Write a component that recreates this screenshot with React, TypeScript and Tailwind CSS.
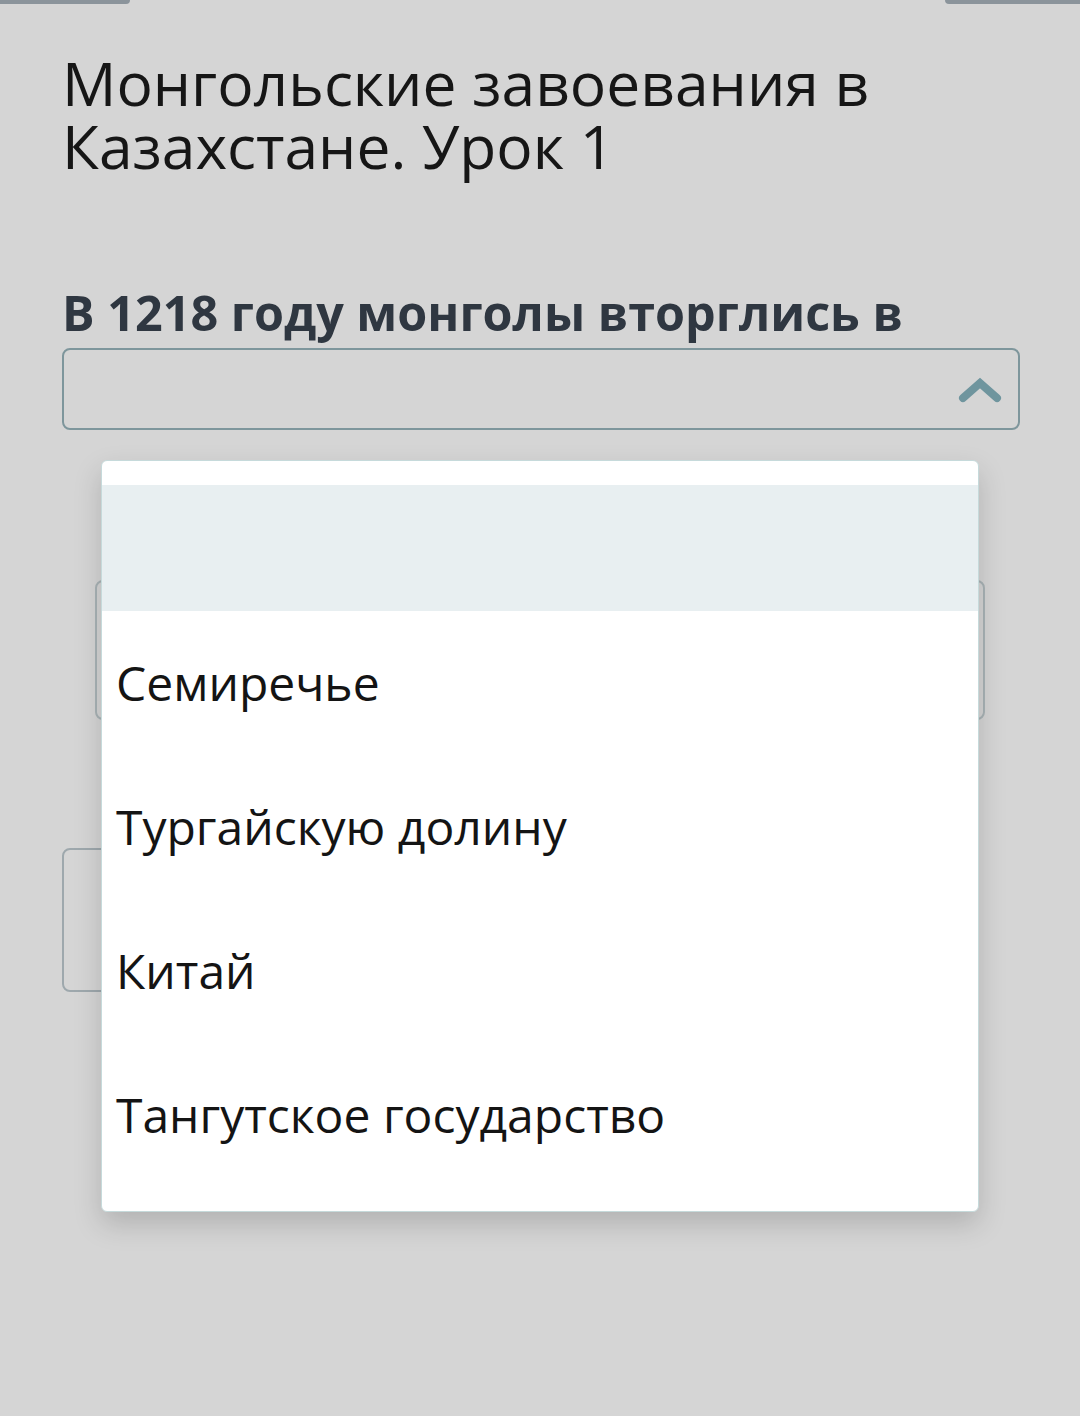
const options = ["Семиречье", "Тургайскую долину", "Китай", "Тангутское государство"];

// Thick caret shown while the list is open
function Caret() {
  return (
    <svg width="44" height="26" viewBox="0 0 44 26" fill="none" className="text-[#6f959e]">
      <path d="M5 21 L22 6 L39 21" stroke="currentColor" strokeWidth="8" strokeLinejoin="miter" strokeLinecap="round" />
    </svg>
  );
}

export default function App() {
  return (
    <div
      className="relative min-h-[1416px] w-[1080px] overflow-hidden bg-[#d5d5d5]"
      style={{ fontFamily: '"Open Sans", "Noto Sans", sans-serif' }}
    >
      {/* toolbar buttons cut off by the top edge */}
      <div className="flex justify-between">
        <div className="h-[4px] w-[130px] rounded-br-[4px] bg-[#8b949b]" />
        <div className="h-[4px] w-[135px] rounded-bl-[4px] bg-[#8b949b]" />
      </div>

      <main className="pl-[62px] pr-[60px] pt-[47px]">
        <h1 className="text-[60.5px] font-normal leading-[63px] text-[#161616]">
          Монгольские завоевания в Казахстане. Урок 1
        </h1>

        <section className="mt-[107px]">
          <h2 className="text-[48.5px] font-bold leading-[56px] text-[#2f3741]">
            В 1218 году монголы вторглись в
          </h2>

          <div className="relative mt-[8px]">
            <div className="flex h-[82px] items-center justify-end rounded-[8px] border-2 border-[#7e969c] pr-[16px] pt-[2px]">
              <Caret />
            </div>

            {/* next questions, dimmed under the open list */}
            <div className="ml-[33px] mr-[35px] mt-[150px] h-[140px] rounded-[8px] border-2 border-[#a9b3b6]" />
            <div className="mt-[128px] h-[144px] w-[300px] rounded-[8px] border-2 border-[#9ea8ad]" />

            <ul className="absolute left-[39px] top-[112px] w-[878px] rounded-[6px] border border-[#c6dadb] bg-white py-[24px] shadow-[0_12px_28px_rgba(0,0,0,0.17)]">
              <li className="h-[126px] bg-[#e8eff1]" />
              {options.map((option) => (
                <li
                  key={option}
                  className="flex h-[144px] items-center px-[14px] text-[48px] leading-none text-[#141414]"
                >
                  {option}
                </li>
              ))}
            </ul>
          </div>
        </section>
      </main>
    </div>
  );
}
